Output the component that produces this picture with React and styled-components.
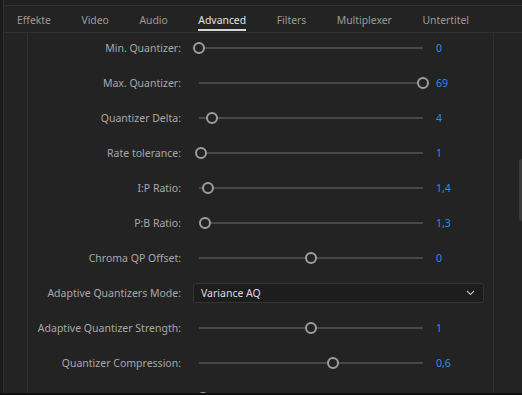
import React from 'react';
import styled, { createGlobalStyle } from 'styled-components';

const Global = createGlobalStyle`
  html, body { margin: 0; padding: 0; background: #232323; }
  body {
    width: 522px; height: 395px; overflow: hidden;
    font-family: "Noto Sans", "Open Sans", sans-serif;
  }
  #root { height: 100%; }
`;

const Frame = styled.div`
  width: 522px;
  height: 395px;
  display: flex;
  flex-direction: column;
  background: #232323;
`;

const Upper = styled.div`
  flex: 1;
  display: flex;
  min-height: 0;
`;

const EdgeStrip = styled.div`
  width: 3px;
  background: #1a1a1a;
  border-right: 1px solid #303030;
`;

const Main = styled.div`
  flex: 1;
  display: flex;
  flex-direction: column;
  min-width: 0;
`;

const TopStrip = styled.div`
  height: 5px;
  background: #202020;
  border-bottom: 1px solid #303030;
`;

const TabBar = styled.div`
  height: 26px;
  display: flex;
  align-items: flex-start;
  gap: 30.5px;
  padding-left: 13px;
  border-bottom: 1px solid #303030;
`;

const Tab = styled.div`
  box-sizing: border-box;
  height: 25px;
  padding-top: 5px;
  display: flex;
  align-items: center;
  font-size: 10.4px;
  color: ${p => (p.$active ? '#e4e4e4' : '#9c9c9c')};
  border-bottom: 2px solid ${p => (p.$active ? '#d8d8d8' : 'transparent')};
  white-space: nowrap;
`;

const Body = styled.div`
  flex: 1;
  display: flex;
  min-height: 0;
  overflow: hidden;
`;

const Gutter = styled.div`
  width: 23px;
`;

const Panel = styled.div`
  width: 465px;
  border-left: 1px solid #303030;
  border-right: 1px solid #303030;
  display: flex;
  flex-direction: column;
  gap: 11px;
  padding-top: 3px;
`;

const ScrollArea = styled.div`
  flex: 1;
  display: flex;
  justify-content: flex-end;
  align-items: flex-start;
`;

const ScrollThumb = styled.div`
  margin-top: 126px;
  width: 3px;
  height: 62px;
  background: #3a3a3a;
  border-radius: 3px 0 0 3px;
`;

const Row = styled.div`
  height: 24px;
  flex: none;
  display: flex;
  align-items: center;
`;

const Label = styled.div`
  width: 153px;
  margin-right: 12px;
  text-align: right;
  font-size: 10.5px;
  color: #a8a8a8;
  white-space: nowrap;
`;

const SliderBox = styled.div`
  position: relative;
  width: 236px;
  height: 14px;
`;

const Track = styled.div`
  position: absolute;
  left: 6px;
  right: 6px;
  top: 6px;
  height: 2px;
  background: #484848;
`;

const Thumb = styled.div`
  position: absolute;
  top: 1px;
  box-sizing: border-box;
  width: 12px;
  height: 12px;
  border-radius: 50%;
  border: 2px solid #9e9e9e;
  background: #232323;
`;

const Value = styled.div`
  margin-left: 7px;
  font-size: 10.5px;
  color: #2e8ceb;
`;

const Select = styled.div`
  box-sizing: border-box;
  width: 291px;
  height: 20px;
  display: flex;
  align-items: center;
  justify-content: space-between;
  padding: 0 8px 0 7px;
  background: #1d1d1d;
  border: 1px solid #343434;
  border-radius: 3px;
  font-size: 10.5px;
  color: #dcdcdc;
`;

const Chevron = () => (
  <svg width="9" height="6" viewBox="0 0 9 6">
    <polyline points="1,1 4.5,4.5 8,1" fill="none" stroke="#b8b8b8" strokeWidth="1.1" />
  </svg>
);

const BottomStrip = styled.div`
  height: 2px;
  background: #0f0f0f;
`;

const Slider = ({ frac }) => (
  <SliderBox>
    <Track />
    <Thumb style={{ left: `${frac * 224}px` }} />
  </SliderBox>
);

const tabs = ['Effekte', 'Video', 'Audio', 'Advanced', 'Filters', 'Multiplexer', 'Untertitel'];

const rows = [
  { id: 'min', label: 'Min. Quantizer:', value: '0', frac: 0 },
  { id: 'max', label: 'Max. Quantizer:', value: '69', frac: 1 },
  { id: 'delta', label: 'Quantizer Delta:', value: '4', frac: 0.057 },
  { id: 'rate', label: 'Rate tolerance:', value: '1', frac: 0.009 },
  { id: 'ip', label: 'I:P Ratio:', value: '1,4', frac: 0.04 },
  { id: 'pb', label: 'P:B Ratio:', value: '1,3', frac: 0.027 },
  { id: 'chroma', label: 'Chroma QP Offset:', value: '0', frac: 0.5 },
  { id: 'aqmode', label: 'Adaptive Quantizers Mode:', select: 'Variance AQ' },
  { id: 'aqs', label: 'Adaptive Quantizer Strength:', value: '1', frac: 0.5 },
  { id: 'comp', label: 'Quantizer Compression:', value: '0,6', frac: 0.598 },
  { id: 'next', label: '', value: '', frac: 0.018 },
];

export default function App() {
  return (
    <>
      <Global />
      <Frame>
        <Upper>
          <EdgeStrip />
          <Main>
            <TopStrip />
            <TabBar>
              {tabs.map(t => (
                <Tab key={t} $active={t === 'Advanced'}>{t}</Tab>
              ))}
            </TabBar>
            <Body>
              <Gutter />
              <Panel>
                {rows.map(r => (
                  <Row key={r.id}>
                    <Label>{r.label}</Label>
                    {r.select ? (
                      <Select>
                        <span>{r.select}</span>
                        <Chevron />
                      </Select>
                    ) : (
                      <>
                        <Slider frac={r.frac} />
                        <Value>{r.value}</Value>
                      </>
                    )}
                  </Row>
                ))}
              </Panel>
              <ScrollArea>
                <ScrollThumb />
              </ScrollArea>
            </Body>
          </Main>
        </Upper>
        <BottomStrip />
      </Frame>
    </>
  );
}
